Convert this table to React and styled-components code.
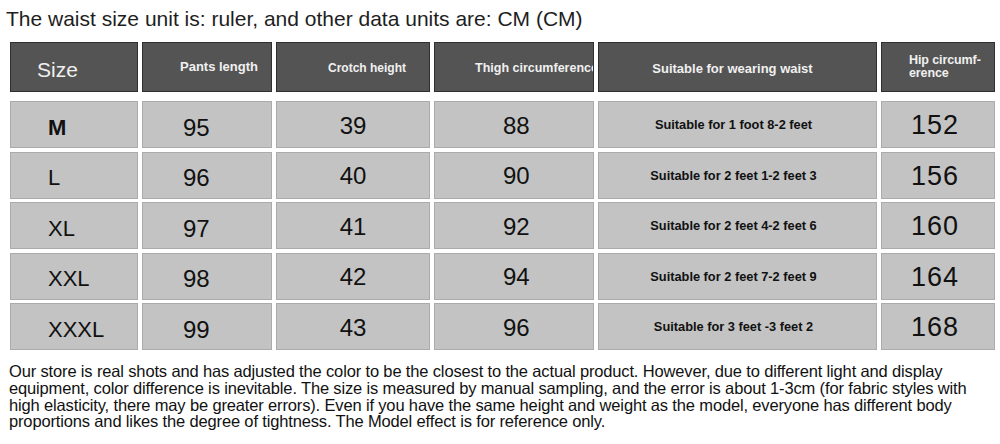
import React from "react";
import styled, { createGlobalStyle } from "styled-components";

const Global = createGlobalStyle`
  html, body { margin: 0; padding: 0; background: #fff; }
  body { font-family: "Liberation Sans", Arial, sans-serif; }
`;

const Page = styled.div`
  width: 1000px;
  height: 444px;
  overflow: hidden;
  background: #fff;
  display: flex;
  flex-direction: column;
`;

const Title = styled.h1`
  margin: 0;
  padding: 6px 0 0 6px;
  height: 36px;
  box-sizing: border-box;
  font-weight: normal;
  font-size: 21px;
  line-height: 26px;
  color: #1e1e1e;
`;

const Grid = styled.div`
  display: grid;
  grid-template-columns: 128px 130px 154px 160px 279px 114px;
  column-gap: 4px;
  margin-left: 10px;
`;

const HeaderGrid = styled(Grid)`
  margin-top: 6px;
  height: 50px;
`;

const BodyGrid = styled(Grid)`
  margin-top: 9px;
  grid-auto-rows: 47px;
  row-gap: 3.5px;
`;

const HeadCell = styled.div`
  box-sizing: border-box;
  background: #545454;
  border: 1px solid #2f2f2f;
  color: #f0f0f0;
  display: flex;
  align-items: center;
  justify-content: ${(p) => p.$justify || "center"};
  padding: ${(p) => p.$pad || "0"};
  font-size: ${(p) => p.$size || "13px"};
  font-weight: ${(p) => (p.$bold ? "bold" : "normal")};
  line-height: ${(p) => p.$lh || "normal"};
  white-space: nowrap;
  overflow: hidden;
  letter-spacing: ${(p) => p.$ls || "0"};
`;

const Cell = styled.div`
  box-sizing: border-box;
  background: #c3c3c3;
  border: 1px solid #ababab;
  color: #111;
  display: flex;
  align-items: center;
  justify-content: ${(p) => p.$justify || "center"};
  padding: ${(p) => p.$pad || "0"};
  font-size: ${(p) => p.$size || "24px"};
  font-weight: ${(p) => (p.$bold ? "bold" : "normal")};
  letter-spacing: ${(p) => p.$ls || "0"};
  white-space: nowrap;
`;

const Footer = styled.p`
  margin: 13px 0 0 9px;
  font-size: 16.5px;
  line-height: 16.8px;
  color: #111;
  letter-spacing: -0.15px;
`;

const Line = styled.span`
  display: block;
  white-space: nowrap;
`;

const rows = [
  { size: "M", len: "95", crotch: "39", thigh: "88", waist: "Suitable for 1 foot 8-2 feet", hip: "152" },
  { size: "L", len: "96", crotch: "40", thigh: "90", waist: "Suitable for 2 feet 1-2 feet 3", hip: "156" },
  { size: "XL", len: "97", crotch: "41", thigh: "92", waist: "Suitable for 2 feet 4-2 feet 6", hip: "160" },
  { size: "XXL", len: "98", crotch: "42", thigh: "94", waist: "Suitable for 2 feet 7-2 feet 9", hip: "164" },
  { size: "XXXL", len: "99", crotch: "43", thigh: "96", waist: "Suitable for 3 feet -3 feet 2", hip: "168" },
];

export default function App() {
  return (
    <Page>
      <Global />
      <Title>The waist size unit is: ruler, and other data units are: CM (CM)</Title>
      <HeaderGrid>
        <HeadCell $justify="flex-start" $pad="5px 0 0 26px" $size="21px">Size</HeadCell>
        <HeadCell $pad="0 0 2px 24px" $bold>Pants length</HeadCell>
        <HeadCell $pad="2px 0 0 28px" $bold $size="12px">Crotch height</HeadCell>
        <HeadCell $justify="flex-start" $pad="2px 0 0 40px" $bold $size="12.5px">Thigh circumference</HeadCell>
        <HeadCell $pad="2px 10px 0 0" $bold>Suitable for wearing waist</HeadCell>
        <HeadCell $justify="flex-start" $pad="0 0 0 27px" $bold $size="12.5px" $lh="13px" $ls="-0.1px">
          <span>Hip circumf-<br />erence</span>
        </HeadCell>
      </HeaderGrid>
      <BodyGrid>
        {rows.map((r) => (
          <React.Fragment key={r.size}>
            <Cell $justify="flex-start" $pad="6px 0 0 37px" $size="22px" $bold={r.size === "M"}>{r.size}</Cell>
            <Cell $justify="flex-start" $pad="6px 0 0 40px">{r.len}</Cell>
            <Cell $pad="2px 0 0 0">{r.crotch}</Cell>
            <Cell $justify="flex-start" $pad="2px 0 0 68px">{r.thigh}</Cell>
            <Cell $size="12.8px" $bold $pad="0 8px 0 0">{r.waist}</Cell>
            <Cell $size="27px" $ls="1px" $pad="2px 6px 0 0">{r.hip}</Cell>
          </React.Fragment>
        ))}
      </BodyGrid>
      <Footer>
        <Line>Our store is real shots and has adjusted the color to be the closest to the actual product. However, due to different light and display</Line>
        <Line>equipment, color difference is inevitable. The size is measured by manual sampling, and the error is about 1-3cm (for fabric styles with</Line>
        <Line>high elasticity, there may be greater errors). Even if you have the same height and weight as the model, everyone has different body</Line>
        <Line>proportions and likes the degree of tightness. The Model effect is for reference only.</Line>
      </Footer>
    </Page>
  );
}
